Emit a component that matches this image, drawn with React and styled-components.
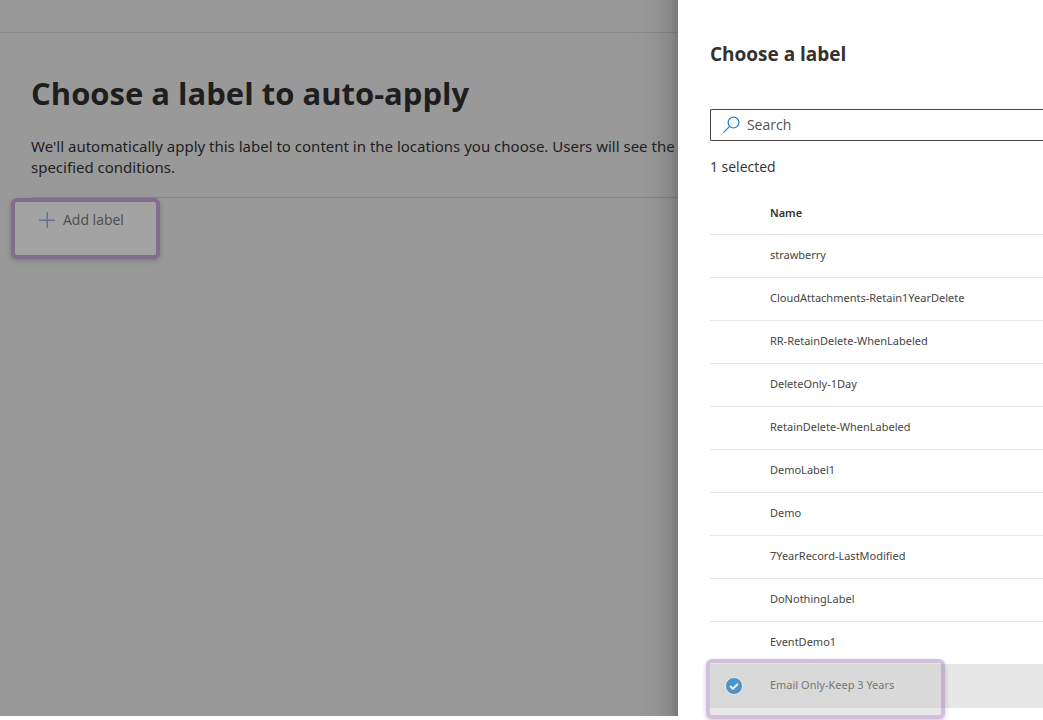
import React, { useState } from "react";
import styled, { createGlobalStyle } from "styled-components";

const GlobalStyle = createGlobalStyle`
  *, *::before, *::after { box-sizing: border-box; }
  body {
    margin: 0;
    background: #fff;
    color: #323130;
    font-family: "Segoe UI", "Open Sans", "Noto Sans", sans-serif;
    overflow: hidden;
  }
`;

const Layout = styled.div`
  display: grid;
  grid-template-columns: 65fr 35fr;
  height: 100vh;
`;

const Page = styled.main`
  margin-bottom: 4px;
  background: linear-gradient(to left, #787878, #888 8px, #929292 20px, #979797 34px, #999 48px);
  color: #1e1e1e;
  overflow: hidden;
`;

const TopBar = styled.div`
  height: 33px;
  border-bottom: 1px solid rgba(0, 0, 0, 0.1);
`;

const Content = styled.div`
  padding: 38px 0 0 31px;
`;

const Title = styled.h1`
  margin: 0;
  font-size: 31px;
  line-height: 44px;
  font-weight: 700;
  white-space: nowrap;
`;

const Description = styled.p`
  margin: 21px 0 0;
  padding-bottom: 19px;
  border-bottom: 1px solid rgba(0, 0, 0, 0.12);
  font-family: "Segoe UI", "Noto Sans", "Open Sans", sans-serif;
  font-size: 15px;
  line-height: 21px;
  white-space: nowrap;
`;

const AddButton = styled.button`
  display: flex;
  align-items: flex-start;
  gap: 8px;
  width: 149px;
  height: 61px;
  margin-left: -20px;
  padding: 9px 0 0 24px;
  border: 4px solid #826d8f;
  border-radius: 6px;
  background: #a3a3a3;
  box-shadow: 0 2px 5px rgba(0, 0, 0, 0.2);
  color: #4d4c4b;
  font: inherit;
  font-size: 14px;
  line-height: 18px;

  svg { flex: none; margin-top: 1px; }
`;

const Panel = styled.aside`
  position: relative;
  min-width: 0;
  padding: 40px 0 0 32px;
  background: #fff;
  overflow: hidden;
`;

const PanelTitle = styled.h2`
  margin: 0;
  font-size: 19px;
  line-height: 28px;
  font-weight: 700;
`;

const SearchBox = styled.label`
  display: flex;
  align-items: center;
  gap: 6px;
  height: 32px;
  margin-top: 41px;
  padding-left: 12px;
  border: 1px solid #484644;
  border-right: 0;
  border-radius: 2px 0 0 2px;
`;

const SearchInput = styled.input`
  flex: 1;
  min-width: 0;
  padding: 0;
  border: 0;
  outline: 0;
  background: none;
  font: inherit;
  font-size: 14px;
  line-height: 20px;

  &::placeholder { color: #55534f; opacity: 1; }
`;

const Count = styled.p`
  margin: 16px 0 15px;
  font-size: 14px;
  line-height: 20px;
`;

const LabelTable = styled.table`
  width: 100%;
  border-collapse: separate;
  border-spacing: 0;
  table-layout: fixed;
  text-align: left;
  font-family: "Segoe UI", "Noto Sans", "Open Sans", sans-serif;
  font-size: 11px;
  line-height: 16px;
`;

const CheckCell = styled.td`
  width: 60px;
  height: 43px;
  padding: 0 0 0 15px;
  border-bottom: 1px solid ${(p) => (p.$selected ? "#e7e7e7" : "#e6e6e6")};
`;

const HeadCell = styled.th`
  height: 43px;
  padding: 0;
  border-bottom: 1px solid #e1e1e1;
  font-weight: 600;
`;

const NameCell = styled.td`
  height: 43px;
  padding: 0 0 2px;
  border-bottom: 1px solid ${(p) => (p.$selected ? "#e7e7e7" : "#e6e6e6")};
  color: #484644;
`;

const Row = styled.tr`
  position: relative;
  background: ${(p) => (p.$selected ? "#e7e7e7" : "#fff")};
`;

const Check = styled.label`
  display: grid;
  width: 18px;
  height: 18px;

  > * { grid-area: 1 / 1; }
  input { appearance: none; margin: 0; }
  svg { opacity: ${(p) => (p.$selected ? 1 : 0)}; pointer-events: none; }
`;

const Highlight = styled.span`
  position: absolute;
  left: -4px;
  top: -6px;
  width: 239px;
  height: 60px;
  border: 4px solid rgba(160, 122, 184, 0.48);
  border-radius: 6px;
  background: rgba(194, 194, 194, 0.38);
  background-clip: padding-box;
  box-shadow: 0 2px 5px rgba(0, 0, 0, 0.2);
  pointer-events: none;
`;

const labels = [
  "strawberry",
  "CloudAttachments-Retain1YearDelete",
  "RR-RetainDelete-WhenLabeled",
  "DeleteOnly-1Day",
  "RetainDelete-WhenLabeled",
  "DemoLabel1",
  "Demo",
  "7YearRecord-LastModified",
  "DoNothingLabel",
  "EventDemo1",
  "Email Only-Keep 3 Years",
];

const PlusIcon = () => (
  <svg width="16" height="16" viewBox="0 0 16 16" fill="none" stroke="#65728c" strokeWidth="1.5" aria-hidden="true">
    <path d="M0 8.2h16M8.2 0v16" />
  </svg>
);

const SearchIcon = () => (
  <svg width="18" height="18" viewBox="0 0 18 18" fill="none" stroke="#1682d4" strokeWidth="1.2" aria-hidden="true">
    <circle cx="10.5" cy="6.6" r="5.4" />
    <path d="M6.7 10.4L.4 16.7" />
  </svg>
);

const CheckIcon = () => (
  <svg width="18" height="18" viewBox="0 0 18 18" aria-hidden="true">
    <circle cx="9" cy="9" r="8.5" fill="#0078d4" stroke="#fff" />
    <path d="M5 9l2.9 2.8 5-4.9" fill="none" stroke="#fff" strokeWidth="2.2" />
  </svg>
);

export default function App() {
  const [selected, setSelected] = useState("Email Only-Keep 3 Years");

  return (
    <>
      <GlobalStyle />
      <Layout>
        <Page>
          <TopBar />
          <Content>
            <Title>Choose a label to auto-apply</Title>
            <Description>
              We'll automatically apply this label to content in the locations you choose. Users will see the
              <br />
              specified conditions.
            </Description>
            <AddButton type="button">
              <PlusIcon />
              Add label
            </AddButton>
          </Content>
        </Page>
        <Panel>
          <PanelTitle>Choose a label</PanelTitle>
          <SearchBox>
            <SearchIcon />
            <SearchInput type="text" placeholder="Search" aria-label="Search" />
          </SearchBox>
          <Count>{selected ? 1 : 0} selected</Count>
          <LabelTable>
            <thead>
              <Row>
                <CheckCell />
                <HeadCell scope="col">Name</HeadCell>
              </Row>
            </thead>
            <tbody>
              {labels.map((name) => {
                const on = name === selected;
                return (
                  <Row key={name} $selected={on}>
                    <CheckCell $selected={on}>
                      <Check $selected={on}>
                        <input
                          type="checkbox"
                          aria-label={name}
                          checked={on}
                          onChange={() => setSelected(on ? null : name)}
                        />
                        <CheckIcon />
                      </Check>
                      {on && <Highlight />}
                    </CheckCell>
                    <NameCell $selected={on}>{name}</NameCell>
                  </Row>
                );
              })}
            </tbody>
          </LabelTable>
        </Panel>
      </Layout>
    </>
  );
}
